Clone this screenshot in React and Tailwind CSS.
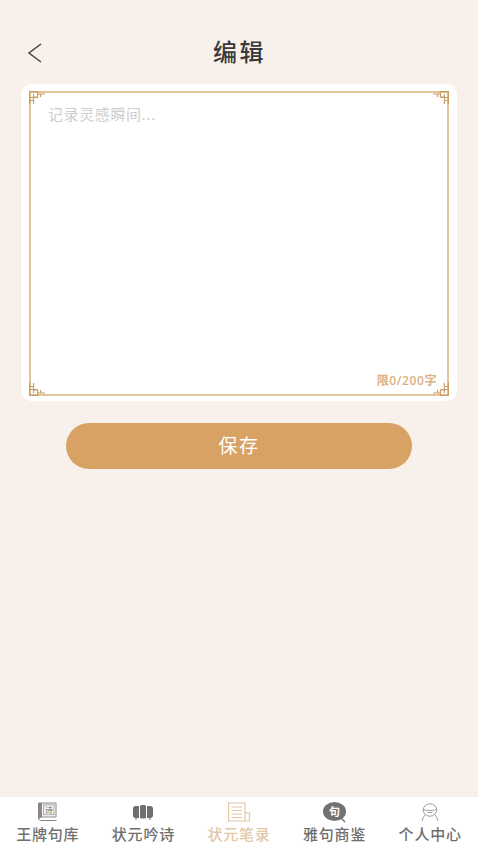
const font = { fontFamily: '"Noto Sans CJK SC", "Noto Sans", sans-serif' };

function Corner({ className }) {
  return (
    <svg viewBox="0 0 16 14" fill="none" stroke="#c99f66" strokeWidth="1.200" className={`absolute h-[14px] w-[16px] ${className}`}>
      <path d="M.6 13.500V.6h8v5.400H4.500V3M.6 6.500h8" />
      <path d="M.6 9.500h4V13M4.500 6.500v3" />
      <path d="M11.500 6V3h4.500M8.500 3h3" />
    </svg>
  );
}

function BookIcon() {
  return (
    <svg viewBox="0 0 22 22" className="h-[22px] w-[22px]" fill="none" stroke="#8a8784" strokeWidth="1">
      <path d="M1.500 18V2h17.500v14H3.500a1.800 1.800 0 0 0-.2 3.500H19.500" />
      <path d="M2 2.500h2.500V16H2z" fill="#8a8784" />
      <rect x="6.500" y="3.800" width="10.500" height="10" fill="#f4f3f1" strokeWidth="0.700" />
      <text x="11.800" y="12.300" fontSize="8" textAnchor="middle" fill="#6f6c69" stroke="none" style={font}>诗</text>
    </svg>
  );
}

function ScrollIcon() {
  return (
    <svg viewBox="0 0 22 22" className="h-[22px] w-[22px]" fill="#6f6f6f">
      <path d="M1 8a2.500 2.500 0 0 1 2.500-3h3.500v12H3.500A2.500 2.500 0 0 1 1 14z" />
      <rect x="8" y="4" width="6" height="13.500" rx="1.500" />
      <path d="M21 8a2.500 2.500 0 0 0-2.500-3H15v12h3.500A2.500 2.500 0 0 0 21 14z" />
      <path d="M3.500 17h1v2h-1zM17.500 17h1v2h-1z" />
    </svg>
  );
}

function NoteIcon() {
  return (
    <svg viewBox="0 0 24 22" className="h-[22px] w-[24px]" fill="none" stroke="#e3c8a6" strokeWidth="1.200">
      <path d="M18 20H1.500V2h16.500z" />
      <path d="M18 12h4.500v8H18" />
      <path d="M4.500 6h10.500M4.500 9.500h10.500M4.500 13h10.500M4.500 16.500h10.500" />
    </svg>
  );
}

function QuoteIcon() {
  return (
    <svg viewBox="0 0 26 22" className="h-[22px] w-[26px]">
      <ellipse cx="12.500" cy="10.500" rx="11.500" ry="9.500" fill="#727272" />
      <path d="M19 17l4 4" stroke="#727272" strokeWidth="1.500" />
      <text x="12.500" y="14.500" fontSize="11" fontWeight="700" textAnchor="middle" fill="#fff" style={font}>句</text>
    </svg>
  );
}

function PersonIcon() {
  return (
    <svg viewBox="0 0 22 22" className="h-[22px] w-[22px]" fill="none" stroke="#8a8784" strokeWidth="0.800">
      <ellipse cx="11" cy="9" rx="6.800" ry="6.200" />
      <path d="M4.500 8.500c4 1.500 9 1.500 13 0M8.500 11.500h5" />
      <path d="M5.800 14c-1.300 1.800-2.300 3.600-2.800 6M16.200 14c1.300 1.800 2.300 3.600 2.800 6" />
    </svg>
  );
}

const tabs = [
  { label: '王牌句库', icon: <BookIcon /> },
  { label: '状元吟诗', icon: <ScrollIcon /> },
  { label: '状元笔录', icon: <NoteIcon />, active: true },
  { label: '雅句商鉴', icon: <QuoteIcon /> },
  { label: '个人中心', icon: <PersonIcon /> },
];

export default function App() {
  return (
    <div className="flex h-[850px] w-full flex-col overflow-hidden bg-[#f8f0ea]" style={font}>
      <header className="relative flex h-[84px] shrink-0 items-center justify-center pt-[17px]">
        <svg viewBox="0 0 16 20" fill="none" stroke="#444" strokeWidth="1.500" className="absolute left-[27px] top-[43px] h-[20px] w-[16px]">
          <path d="M14 1L2 10l12 9" />
        </svg>
        <h1 className="pl-[1px] text-[24px] font-medium leading-none tracking-[2.500px] text-[#3a3a3a]">编辑</h1>
      </header>

      <main className="flex-1 px-[21px]">
        <div className="h-[317px] rounded-[10px] bg-white pb-[5px] pl-[8px] pr-[8px] pt-[7px]">
          <div className="relative flex h-full flex-col justify-between border-2 border-[#e2c598] pb-[5px] pl-[17px] pr-[10px] pt-[11px]">
            <Corner className="-left-[2px] -top-[2px]" />
            <Corner className="-right-[2px] -top-[2px] -scale-x-100" />
            <Corner className="-bottom-[2px] -left-[2px] -scale-y-100" />
            <Corner className="-bottom-[2px] -right-[2px] -scale-100" />
            <p className="text-[15px] leading-[20px] tracking-[0.6px] text-[#cdcdcd]">记录灵感瞬间...</p>
            <p className="text-right text-[12px] font-semibold leading-[16px] tracking-[0.6px] text-[#d8b283]" style={{ fontFamily: '"Open Sans", "Noto Sans CJK SC", sans-serif' }}>限0/200字</p>
          </div>
        </div>

        <button className="mx-auto mt-[22px] block h-[46px] w-[346px] rounded-full bg-[#d9a265] pb-[2px] text-[19px] tracking-[1.500px] text-[#fff]">
          保存
        </button>
      </main>

      <nav className="grid h-[53px] shrink-0 grid-cols-5 bg-white">
        {tabs.map((tab) => (
          <div key={tab.label} className="flex flex-col items-center pt-[4px]">
            <div className="flex h-[22px] items-center justify-center">{tab.icon}</div>
            <span className={`mt-[1px] text-[15px] font-medium leading-[20px] tracking-[0.8px] ${tab.active ? 'text-[#e3c8a6]' : 'text-[#6f6f6f]'}`}>
              {tab.label}
            </span>
          </div>
        ))}
      </nav>
    </div>
  );
}
